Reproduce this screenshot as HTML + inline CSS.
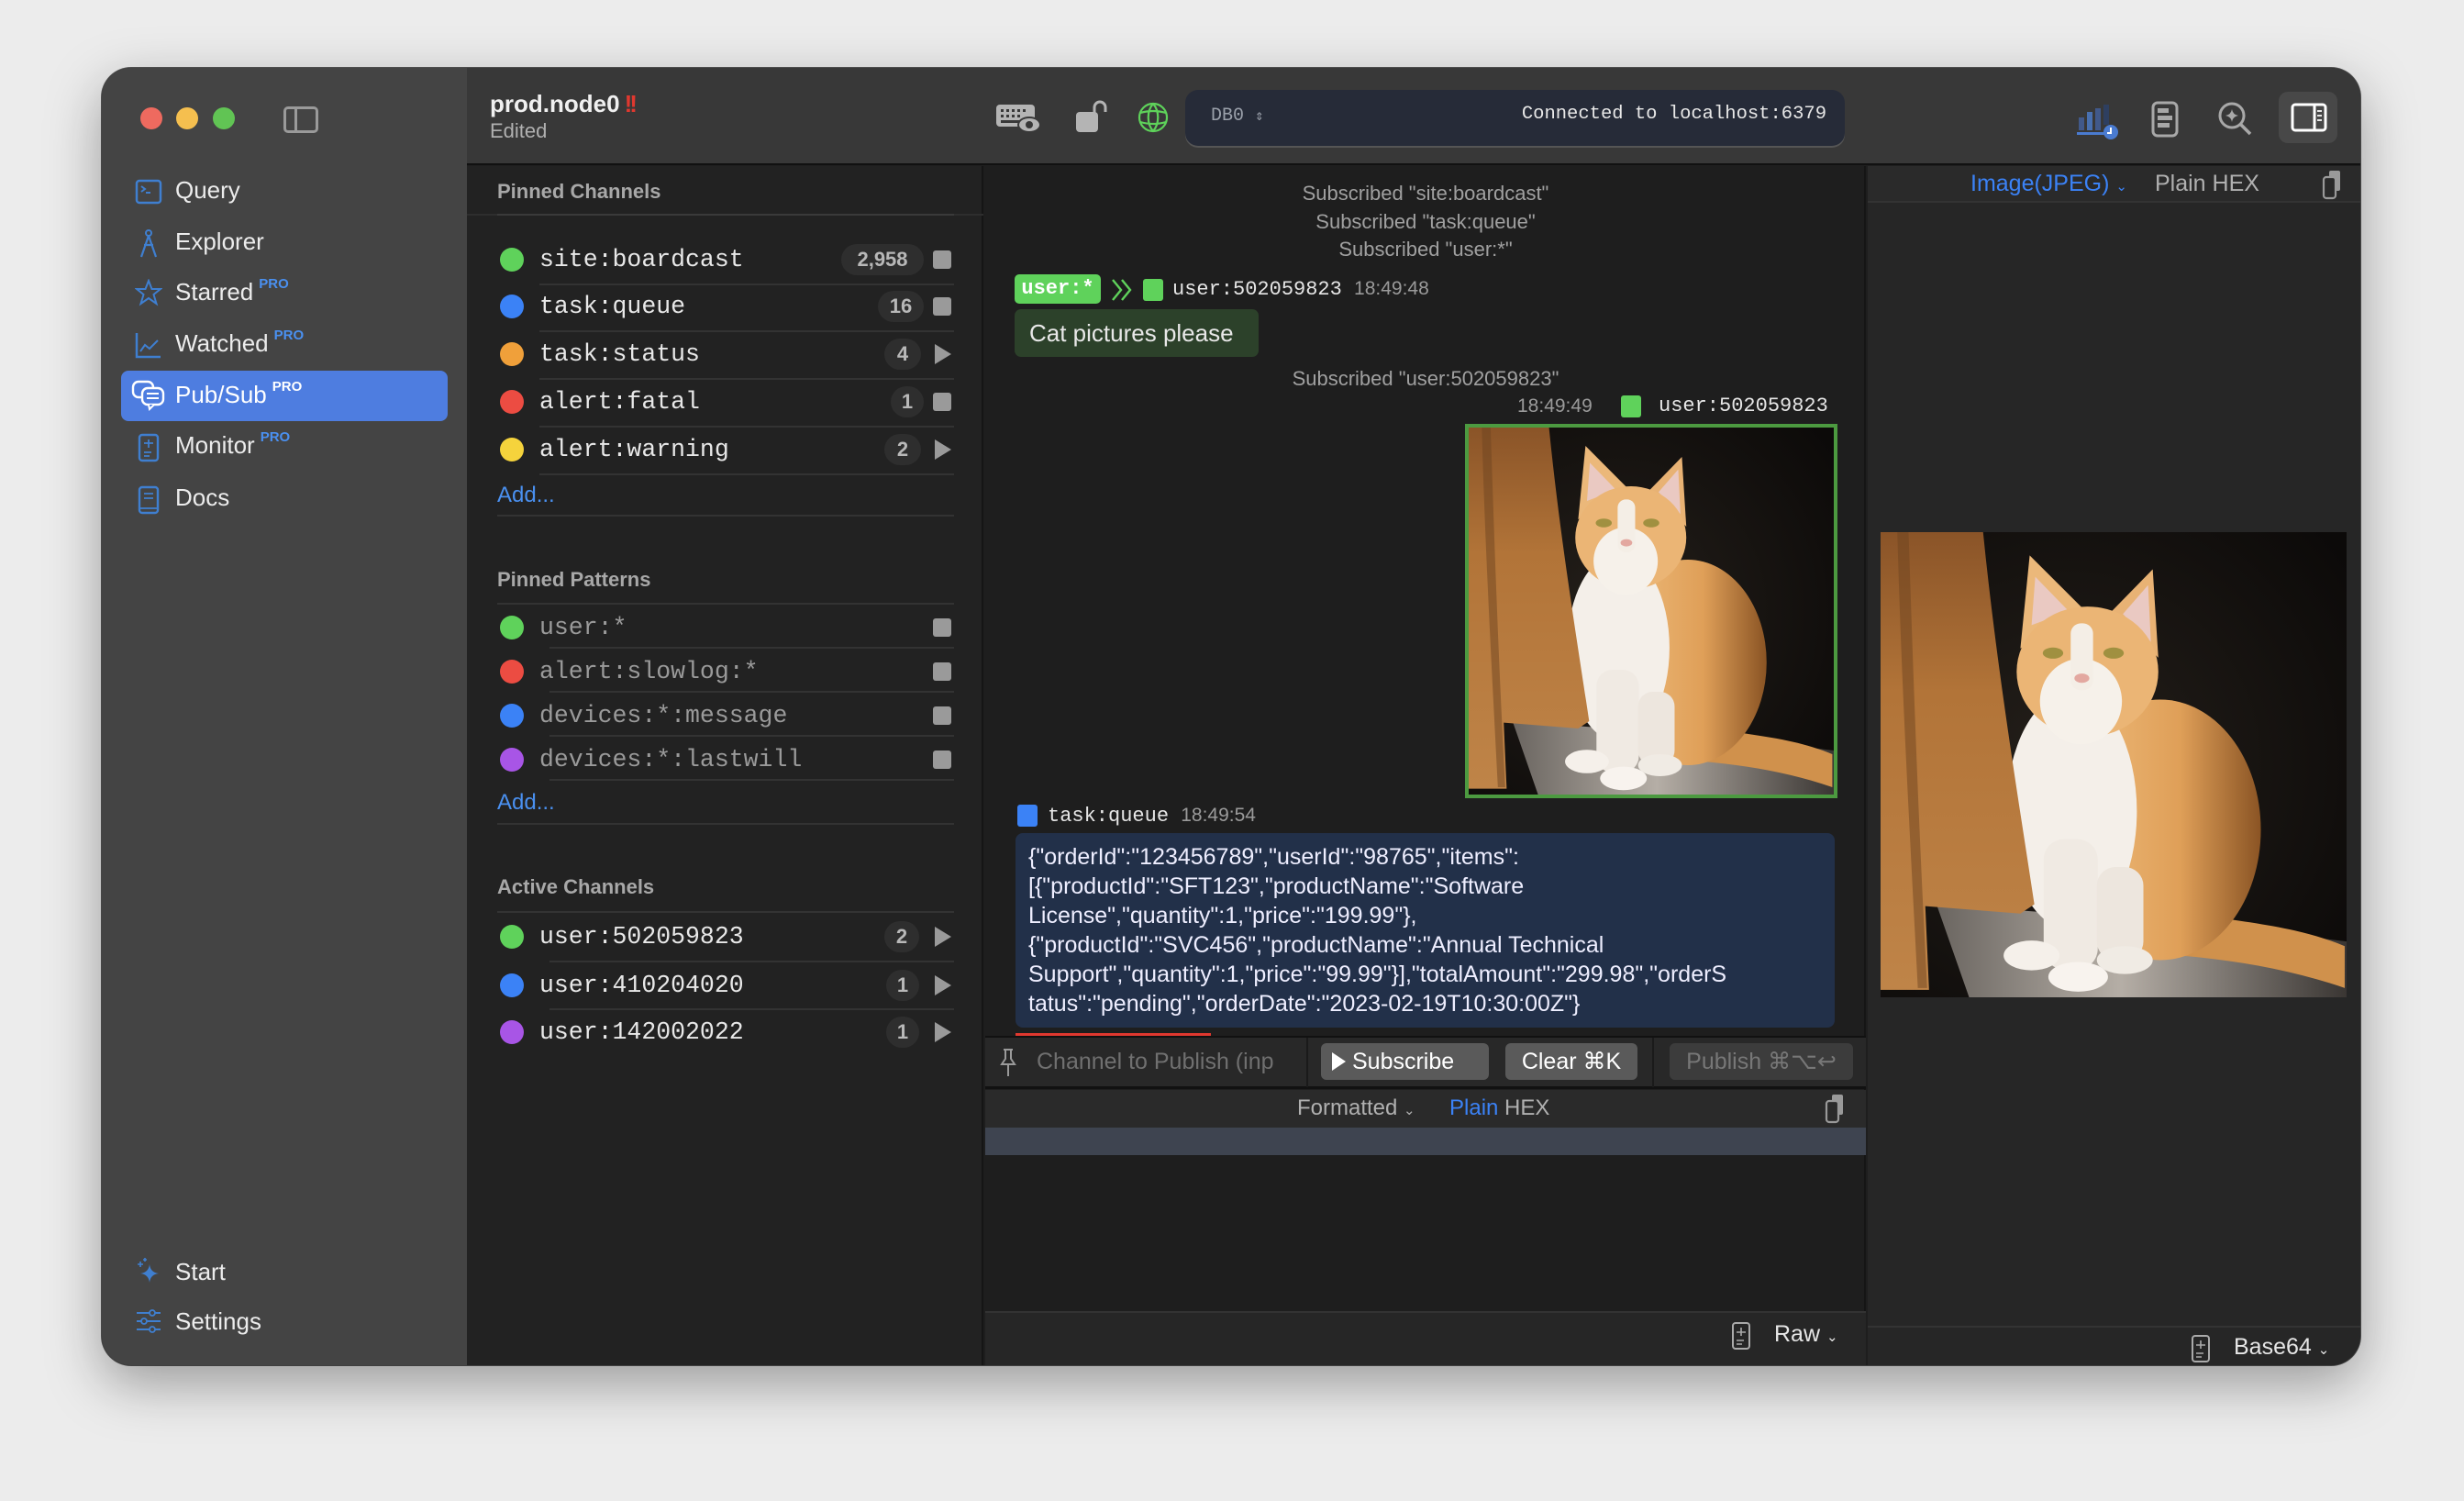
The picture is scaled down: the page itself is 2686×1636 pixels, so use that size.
<!DOCTYPE html>
<html><head><meta charset="utf-8">
<style>
*{margin:0;padding:0;box-sizing:border-box}
body{width:2686px;height:1636px;background:#ececec;position:relative;overflow:hidden;font-family:"Liberation Sans",sans-serif;color:#e6e6e6}
.a{position:absolute}
.win{position:absolute;left:111px;top:74px;width:2462px;height:1414px;border-radius:32px;overflow:hidden;background:#1e1e1e;box-shadow:0 20px 60px rgba(0,0,0,.35),0 0 0 1px #555}
.mono{font-family:"Liberation Mono","DejaVu Sans Mono",monospace}
.side{left:0;top:0;width:398px;height:1414px;background:#444}
.nav{position:absolute;left:80px;font-size:26px;color:#ececec}
.pro{font-size:15px;color:#4a90f0;vertical-align:top;position:relative;top:-2px;margin-left:6px;font-weight:bold}
.ico{position:absolute;left:36px}
.hdr{font-size:22px;font-weight:bold;color:#a8a8a8;position:absolute;left:431px}
.line{position:absolute;height:2px;background:#333}
.dot{position:absolute;left:434px;width:26px;height:26px;border-radius:50%}
.ch{position:absolute;left:477px;font-size:26.5px;color:#e8e8e8;line-height:30px}
.pat{color:#9a9a9a}
.badge{position:absolute;height:34px;border-radius:17px;background:#2e2e2e;color:#b8b8b8;font-size:22px;font-weight:bold;line-height:34px;text-align:center}
.stop{position:absolute;left:906px;width:20px;height:20px;background:#9a9a9a;border-radius:3px}
.play{position:absolute;left:908px;width:0;height:0;border-top:11px solid transparent;border-bottom:11px solid transparent;border-left:18px solid #9a9a9a}
.add{position:absolute;left:431px;font-size:24px;color:#4a90f0}
.sub{position:absolute;left:963px;width:960px;text-align:center;font-size:22px;color:#a0a0a0}
</style></head><body>
<svg width="0" height="0" style="position:absolute">
<defs>
<linearGradient id="cur" x1="0" y1="0" x2="0" y2="1"><stop offset="0" stop-color="#8a5428"/><stop offset=".35" stop-color="#b27438"/><stop offset="1" stop-color="#bf8448"/></linearGradient>
<linearGradient id="flo" x1="0" y1="0" x2="1" y2="0"><stop offset="0" stop-color="#6a6560"/><stop offset=".45" stop-color="#b5aea6"/><stop offset="1" stop-color="#3a3633"/></linearGradient>
<radialGradient id="bg" cx=".4" cy=".5" r=".75"><stop offset="0" stop-color="#241f1a"/><stop offset="1" stop-color="#0c0a09"/></radialGradient>
<linearGradient id="body" x1="0" y1="0" x2="1" y2="0"><stop offset="0" stop-color="#f0bf80"/><stop offset=".6" stop-color="#df9f58"/><stop offset="1" stop-color="#8a5424"/></linearGradient>
<g id="cat">
<rect width="500" height="500" fill="url(#bg)"/>
<polygon points="60,400 330,420 500,440 500,500 95,500" fill="url(#flo)"/>
<path d="M330,410 C400,420 450,425 498,445 L498,490 C440,470 380,460 320,455 Z" fill="#d0914c"/>
<ellipse cx="300" cy="320" rx="108" ry="140" fill="url(#body)"/>
<ellipse cx="205" cy="300" rx="70" ry="128" fill="#f4efe9"/>
<rect x="175" y="330" width="58" height="140" rx="22" fill="#f0eae3"/>
<rect x="232" y="360" width="50" height="100" rx="20" fill="#ede6de"/>
<ellipse cx="162" cy="455" rx="30" ry="16" fill="#f5f0ea"/>
<ellipse cx="212" cy="478" rx="32" ry="16" fill="#f8f3ee"/>
<ellipse cx="262" cy="460" rx="30" ry="15" fill="#f0ebe4"/>
<polygon points="150,125 160,25 220,85" fill="#ebb87a"/>
<polygon points="248,85 292,40 298,135" fill="#e8b274"/>
<polygon points="162,100 166,48 202,85" fill="#eac9c2"/>
<polygon points="260,88 287,57 290,118" fill="#eac9c2"/>
<ellipse cx="222" cy="150" rx="76" ry="70" fill="#ebb575"/>
<ellipse cx="215" cy="182" rx="44" ry="46" fill="#f6f1ea"/>
<rect x="204" y="98" width="24" height="72" rx="11" fill="#f4eee6"/>
<ellipse cx="185" cy="130" rx="11" ry="6" fill="#a09040"/>
<ellipse cx="250" cy="130" rx="11" ry="6" fill="#a09040"/>
<ellipse cx="216" cy="157" rx="8" ry="5" fill="#e3a8a0"/>
<path d="M0,0 L110,0 C125,150 150,300 165,400 L150,410 L48,402 L52,492 L0,492 Z" fill="url(#cur)"/>
<path d="M18,0 L30,0 C35,150 40,300 50,490 L40,490 C30,300 22,150 18,0Z" fill="#6e4420" opacity=".5"/>
</g>
</defs></svg>

<div class="win">
<div class="a side"></div>
<div class="a" style="left:42px;top:43px;width:24px;height:24px;border-radius:50%;background:#ee6a5f"></div>
<div class="a" style="left:81px;top:43px;width:24px;height:24px;border-radius:50%;background:#f5bf4f"></div>
<div class="a" style="left:121px;top:43px;width:24px;height:24px;border-radius:50%;background:#61c454"></div>
<div class="a" style="left:198px;top:42px;width:38px;height:29px;border:3px solid #9a9a9a;border-radius:5px"><div class="a" style="left:9px;top:0;width:3px;height:23px;background:#9a9a9a"></div></div>

<svg class="ico" style="top:120px" width="30" height="30" viewBox="0 0 30 30"><rect x="2" y="3" width="26" height="24" rx="3" fill="none" stroke="#3f7fd0" stroke-width="2.5"/><path d="M7 9 l4 3 -4 3 M12 16 h5" stroke="#3f7fd0" stroke-width="2" fill="none"/></svg>
<div class="nav" style="top:118px">Query</div>
<svg class="ico" style="top:175px" width="30" height="32" viewBox="0 0 30 32"><circle cx="15" cy="5" r="3" fill="none" stroke="#3f7fd0" stroke-width="2"/><path d="M15 8 L7 31 M15 8 L23 31 M10 18 h10" stroke="#3f7fd0" stroke-width="2.2" fill="none"/></svg>
<div class="nav" style="top:174px">Explorer</div>
<svg class="ico" style="top:230px" width="30" height="30" viewBox="0 0 30 30"><path d="M15 2 L18.5 11 L28 11 L20.5 17 L23.5 27 L15 21 L6.5 27 L9.5 17 L2 11 L11.5 11 Z" fill="none" stroke="#3f7fd0" stroke-width="2"/></svg>
<div class="nav" style="top:229px">Starred<span class="pro">PRO</span></div>
<svg class="ico" style="top:287px" width="30" height="30" viewBox="0 0 30 30"><path d="M2 2 V28 H28" stroke="#3f7fd0" stroke-width="2.5" fill="none"/><path d="M6 22 L11 15 L16 19 L25 10" stroke="#3f7fd0" stroke-width="2" fill="none"/></svg>
<div class="nav" style="top:285px">Watched<span class="pro">PRO</span></div>
<div class="a" style="left:21px;top:330px;width:356px;height:55px;border-radius:8px;background:#4e7de0"></div>
<svg class="ico" style="left:32px;top:340px" width="38" height="34" viewBox="0 0 38 34"><rect x="2" y="2" width="22" height="17" rx="6" fill="none" stroke="#fff" stroke-width="2.4"/><rect x="12" y="9" width="23" height="18" rx="6" fill="#4e7de0" stroke="#fff" stroke-width="2.4"/><path d="M17 15 h13 M17 20 h13" stroke="#fff" stroke-width="2"/><path d="M19 27 L20 32 L25 27" fill="#4e7de0" stroke="#fff" stroke-width="2"/></svg>
<div class="nav" style="top:341px;color:#fff">Pub/Sub<span class="pro" style="color:#fff">PRO</span></div>
<svg class="ico" style="top:398px" width="30" height="32" viewBox="0 0 30 32"><rect x="5" y="2" width="20" height="28" rx="3" fill="none" stroke="#3f7fd0" stroke-width="2.4"/><path d="M10 11 h10 M15 7 v9 M10 21 h8 M10 25 h6" stroke="#3f7fd0" stroke-width="1.8"/></svg>
<div class="nav" style="top:396px">Monitor<span class="pro">PRO</span></div>
<svg class="ico" style="top:455px" width="30" height="32" viewBox="0 0 30 32"><rect x="5" y="2" width="20" height="28" rx="3" fill="none" stroke="#3f7fd0" stroke-width="2.4"/><path d="M10 9 h10 M10 14 h10 M5 25 h20" stroke="#3f7fd0" stroke-width="1.8"/></svg>
<div class="nav" style="top:453px">Docs</div>
<svg class="ico" style="top:1296px" width="30" height="30" viewBox="0 0 30 30"><path d="M16 8 Q17 17 26 18 Q17 19 16 28 Q15 19 6 18 Q15 17 16 8Z" fill="#3f7fd0"/><path d="M6 5 v6 M3 8 h6 M11 1 v4 M9 3 h4" stroke="#3f7fd0" stroke-width="1.6"/></svg>
<div class="nav" style="top:1297px">Start</div>
<svg class="ico" style="top:1353px" width="30" height="26" viewBox="0 0 30 26"><path d="M2 4 h26 M2 13 h26 M2 22 h26" stroke="#3f7fd0" stroke-width="2"/><circle cx="19" cy="4" r="3" fill="#444" stroke="#3f7fd0" stroke-width="1.8"/><circle cx="10" cy="13" r="3" fill="#444" stroke="#3f7fd0" stroke-width="1.8"/><circle cx="19" cy="22" r="3" fill="#444" stroke="#3f7fd0" stroke-width="1.8"/></svg>
<div class="nav" style="top:1351px">Settings</div>

<div class="a" style="left:398px;top:0;width:2064px;height:106px;background:#383838;border-bottom:2px solid #111"></div>
<div class="a" style="left:423px;top:24px;font-size:26px;font-weight:bold;color:#f0f0f0">prod.node0<span style="color:#e0382f;letter-spacing:-3px;margin-left:5px">!!</span></div>
<div class="a" style="left:423px;top:56px;font-size:22px;color:#b0b0b0">Edited</div>
<svg class="a" style="left:975px;top:38px" width="50" height="34" viewBox="0 0 50 34"><rect x="0" y="2" width="42" height="24" rx="4" fill="#b4b4b4"/><g fill="#383838"><rect x="5" y="7" width="3" height="3"/><rect x="11" y="7" width="3" height="3"/><rect x="17" y="7" width="3" height="3"/><rect x="23" y="7" width="3" height="3"/><rect x="29" y="7" width="3" height="3"/><rect x="5" y="13" width="3" height="3"/><rect x="11" y="13" width="3" height="3"/><rect x="17" y="13" width="3" height="3"/><rect x="23" y="13" width="3" height="3"/><rect x="5" y="19" width="22" height="3"/></g><ellipse cx="36" cy="24" rx="13" ry="9" fill="#383838"/><ellipse cx="36" cy="24" rx="11" ry="7" fill="#b4b4b4"/><circle cx="36" cy="24" r="4" fill="#383838"/></svg>
<svg class="a" style="left:1060px;top:34px" width="40" height="40" viewBox="0 0 40 40"><rect x="2" y="14" width="24" height="22" rx="4" fill="#b4b4b4"/><path d="M22 15 V9 a6 6 0 0 1 12 0 V14" fill="none" stroke="#b4b4b4" stroke-width="3"/></svg>
<svg class="a" style="left:1129px;top:37px" width="34" height="34" viewBox="0 0 34 34"><g fill="none" stroke="#5ed25a" stroke-width="2.2"><circle cx="17" cy="17" r="15"/><path d="M17 2 C10 10 10 24 17 32 M17 2 C24 10 24 24 17 32 M3 12 Q17 8 31 12 M3 22 Q17 26 31 22"/></g></svg>
<div class="a" style="left:1181px;top:24px;width:719px;height:61px;border-radius:14px;background:#262b38;box-shadow:0 2px 0 #555"></div>
<div class="a mono" style="left:1209px;top:41px;font-size:20px;color:#9aa0aa">DB0 <span style="font-size:16px">⇕</span></div>
<div class="a mono" style="left:1520px;top:39px;width:360px;text-align:right;font-size:20.5px;color:#e8e8e8">Connected to localhost:6379</div>
<svg class="a" style="left:2153px;top:38px" width="46" height="40" viewBox="0 0 46 40"><rect x="2" y="16" width="6" height="14" fill="#41598a"/><rect x="11" y="10" width="6" height="20" fill="#4870b0"/><rect x="20" y="6" width="6" height="24" fill="#41598a"/><rect x="29" y="2" width="6" height="22" fill="#2e3f60"/><rect x="0" y="32" width="32" height="3" fill="#4a7bd0"/><circle cx="37" cy="32" r="8" fill="#4a7bd0"/><path d="M37 27 v6 h-4" stroke="#fff" stroke-width="2" fill="none"/></svg>
<svg class="a" style="left:2234px;top:36px" width="30" height="40" viewBox="0 0 30 40"><rect x="2" y="2" width="26" height="36" rx="5" fill="none" stroke="#a8a8a8" stroke-width="3"/><rect x="7" y="8" width="12" height="5" fill="#a8a8a8"/><rect x="7" y="16" width="16" height="5" fill="#a8a8a8"/><rect x="7" y="24" width="13" height="5" fill="#a8a8a8"/></svg>
<svg class="a" style="left:2306px;top:36px" width="40" height="40" viewBox="0 0 40 40"><circle cx="16" cy="16" r="13" fill="none" stroke="#a8a8a8" stroke-width="3"/><path d="M25 25 L36 36" stroke="#a8a8a8" stroke-width="3.5"/><path d="M16 9 Q17 15 23 16 Q17 17 16 23 Q15 17 9 16 Q15 15 16 9Z" fill="#a8a8a8"/></svg>
<div class="a" style="left:2373px;top:26px;width:64px;height:56px;border-radius:10px;background:#484848"></div>
<svg class="a" style="left:2386px;top:38px" width="40" height="32" viewBox="0 0 40 32"><rect x="2" y="2" width="36" height="28" rx="3" fill="none" stroke="#fff" stroke-width="3"/><path d="M26 2 V30" stroke="#fff" stroke-width="3"/><path d="M29 9 h5 M29 14 h5 M29 19 h5" stroke="#fff" stroke-width="1.8"/></svg>

<div class="a" style="left:398px;top:107px;width:563px;height:1307px;background:#222;border-right:2px solid #151515"></div>
<div class="hdr" style="top:122px">Pinned Channels</div>
<div class="line" style="left:398px;top:159px;width:563px;background:#2e2e2e"></div>
<div class="line" style="left:431px;top:159px;width:498px;background:#3a3a3a"></div>

<div class="dot" style="top:196px;background:#5fd25b"></div><div class="ch mono" style="top:194px">site:boardcast</div>
<div class="badge" style="left:806px;top:192px;width:90px">2,958</div><div class="stop" style="top:199px"></div>
<div class="line" style="left:477px;top:235px;width:452px"></div>
<div class="dot" style="top:247px;background:#3b82f6"></div><div class="ch mono" style="top:245px">task:queue</div>
<div class="badge" style="left:846px;top:243px;width:50px">16</div><div class="stop" style="top:250px"></div>
<div class="line" style="left:477px;top:286px;width:452px"></div>
<div class="dot" style="top:299px;background:#f0a03a"></div><div class="ch mono" style="top:297px">task:status</div>
<div class="badge" style="left:853px;top:295px;width:40px">4</div><div class="play" style="top:301px"></div>
<div class="line" style="left:477px;top:338px;width:452px"></div>
<div class="dot" style="top:351px;background:#ec4c42"></div><div class="ch mono" style="top:349px">alert:fatal</div>
<div class="badge" style="left:860px;top:347px;width:36px">1</div><div class="stop" style="top:354px"></div>
<div class="line" style="left:477px;top:390px;width:452px"></div>
<div class="dot" style="top:403px;background:#f5d33c"></div><div class="ch mono" style="top:401px">alert:warning</div>
<div class="badge" style="left:853px;top:399px;width:40px">2</div><div class="play" style="top:405px"></div>
<div class="line" style="left:477px;top:442px;width:452px"></div>
<div class="add" style="top:452px">Add...</div>
<div class="line" style="left:431px;top:487px;width:498px"></div>

<div class="hdr" style="top:545px">Pinned Patterns</div>
<div class="line" style="left:431px;top:583px;width:498px"></div>
<div class="dot" style="top:597px;background:#5fd25b"></div><div class="ch mono pat" style="top:595px">user:*</div><div class="stop" style="top:600px"></div>
<div class="line" style="left:488px;top:631px;width:441px"></div>
<div class="dot" style="top:645px;background:#ec4c42"></div><div class="ch mono pat" style="top:643px">alert:slowlog:*</div><div class="stop" style="top:648px"></div>
<div class="line" style="left:488px;top:679px;width:441px"></div>
<div class="dot" style="top:693px;background:#3b82f6"></div><div class="ch mono pat" style="top:691px">devices:*:message</div><div class="stop" style="top:696px"></div>
<div class="line" style="left:488px;top:727px;width:441px"></div>
<div class="dot" style="top:741px;background:#a855e6"></div><div class="ch mono pat" style="top:739px">devices:*:lastwill</div><div class="stop" style="top:744px"></div>
<div class="line" style="left:488px;top:775px;width:441px"></div>
<div class="add" style="top:787px">Add...</div>
<div class="line" style="left:431px;top:823px;width:498px"></div>

<div class="hdr" style="top:880px">Active Channels</div>
<div class="line" style="left:431px;top:919px;width:498px"></div>
<div class="dot" style="top:934px;background:#5fd25b"></div><div class="ch mono" style="top:932px">user:502059823</div>
<div class="badge" style="left:853px;top:930px;width:38px">2</div><div class="play" style="top:936px"></div>
<div class="line" style="left:488px;top:973px;width:441px"></div>
<div class="dot" style="top:987px;background:#3b82f6"></div><div class="ch mono" style="top:985px">user:410204020</div>
<div class="badge" style="left:855px;top:983px;width:36px">1</div><div class="play" style="top:989px"></div>
<div class="line" style="left:488px;top:1025px;width:441px"></div>
<div class="dot" style="top:1038px;background:#a855e6"></div><div class="ch mono" style="top:1036px">user:142002022</div>
<div class="badge" style="left:855px;top:1034px;width:36px">1</div><div class="play" style="top:1040px"></div>

<div class="a" style="left:963px;top:107px;width:960px;height:1307px;background:#1e1e1e;border-right:2px solid #151515"></div>
<div class="sub" style="top:124px">Subscribed "site:boardcast"</div>
<div class="sub" style="top:155px">Subscribed "task:queue"</div>
<div class="sub" style="top:185px">Subscribed "user:*"</div>
<div class="a mono" style="left:995px;top:225px;width:94px;height:32px;border-radius:5px;background:#5fd25b;color:#fff;font-weight:bold;font-size:22px;line-height:32px;text-align:center">user:*</div>
<svg class="a" style="left:1099px;top:229px" width="28" height="26" viewBox="0 0 28 26"><path d="M3 2 L12 13 L3 24 M13 2 L22 13 L13 24" stroke="#5fd25b" stroke-width="2.4" fill="none"/></svg>
<div class="a" style="left:1135px;top:230px;width:22px;height:24px;border-radius:3px;background:#5fd25b"></div>
<div class="a mono" style="left:1167px;top:229px;font-size:22px;color:#e6e6e6">user:502059823 <span style="font-family:'Liberation Sans',sans-serif;color:#9a9a9a;font-size:21px">18:49:48</span></div>
<div class="a" style="left:995px;top:263px;width:266px;height:52px;border-radius:7px;background:#2c412a;font-size:26px;line-height:52px;padding-left:16px;color:#e8e8e8">Cat pictures please</div>
<div class="sub" style="top:326px">Subscribed "user:502059823"</div>
<div class="a" style="left:1543px;top:357px;font-size:21px;color:#9a9a9a">18:49:49</div>
<div class="a" style="left:1656px;top:357px;width:22px;height:24px;border-radius:3px;background:#5fd25b"></div>
<div class="a mono" style="left:1697px;top:356px;font-size:22px;color:#e6e6e6">user:502059823</div>
<div class="a" style="left:1486px;top:388px;width:406px;height:408px;border:4px solid #4c9a40;background:#111;overflow:hidden"><svg width="398" height="400" viewBox="0 0 500 500" preserveAspectRatio="none"><use href="#cat"/></svg></div>
<div class="a" style="left:998px;top:803px;width:22px;height:24px;border-radius:3px;background:#3b82f6"></div>
<div class="a mono" style="left:1031px;top:803px;font-size:22px;color:#e6e6e6">task:queue <span style="font-family:'Liberation Sans',sans-serif;color:#9a9a9a;font-size:21px">18:49:54</span></div>
<div class="a" style="left:996px;top:834px;width:893px;height:212px;border-radius:8px;background:#223049;padding:10px 14px;font-size:25px;line-height:32px;color:#eef;word-break:break-all">{"orderId":"123456789","userId":"98765","items":<br>[{"productId":"SFT123","productName":"Software<br>License","quantity":1,"price":"199.99"},<br>{"productId":"SVC456","productName":"Annual Technical<br>Support","quantity":1,"price":"99.99"}],"totalAmount":"299.98","orderS<br>tatus":"pending","orderDate":"2023-02-19T10:30:00Z"}</div>
<div class="a" style="left:996px;top:1052px;width:213px;height:3px;background:#e0382f"></div>

<div class="a" style="left:963px;top:1055px;width:960px;height:58px;background:#282828;border-top:2px solid #111;border-bottom:3px solid #111"></div>
<svg class="a" style="left:978px;top:1068px" width="20" height="32" viewBox="0 0 20 32"><path d="M5 2 h10 M7 2 v10 l-4 6 h14 l-4 -6 v-10 M10 18 v13" stroke="#9a9a9a" stroke-width="2" fill="none"/></svg>
<div class="a" style="left:1019px;top:1069px;font-size:25px;color:#707070">Channel to Publish (inp</div>
<div class="a" style="left:1313px;top:1057px;width:2px;height:54px;background:#1a1a1a"></div>
<div class="a" style="left:1329px;top:1063px;width:183px;height:40px;border-radius:6px;background:#5a5a5a;font-size:25px;line-height:40px;color:#fff;padding-left:34px">Subscribe</div>
<div class="a" style="left:1341px;top:1073px;width:0;height:0;border-top:10px solid transparent;border-bottom:10px solid transparent;border-left:15px solid #fff"></div>
<div class="a" style="left:1530px;top:1063px;width:144px;height:40px;border-radius:6px;background:#5a5a5a;font-size:25px;line-height:40px;color:#fff;text-align:center">Clear ⌘K</div>
<div class="a" style="left:1690px;top:1057px;width:2px;height:54px;background:#1a1a1a"></div>
<div class="a" style="left:1709px;top:1063px;width:200px;height:40px;border-radius:6px;background:#3c3c3c;font-size:25px;line-height:40px;color:#777;text-align:center">Publish ⌘⌥↩</div>

<div class="a" style="left:963px;top:1114px;width:960px;height:41px;background:#2a2a2a"></div>
<div class="a" style="left:1303px;top:1120px;font-size:24px;color:#b0b0b0">Formatted <span style="font-size:15px">⌄</span></div>
<div class="a" style="left:1469px;top:1120px;font-size:24px;color:#3b82f6">Plain <span style="color:#b0b0b0">HEX</span></div>
<svg class="a" style="left:1878px;top:1117px" width="24" height="34" viewBox="0 0 24 34"><rect x="8" y="2" width="12" height="22" rx="2" fill="#999"/><rect x="2" y="9" width="13" height="23" rx="3" fill="#2a2a2a" stroke="#999" stroke-width="2.2"/></svg>
<div class="a" style="left:963px;top:1155px;width:960px;height:30px;background:#3e4450"></div>
<div class="a" style="left:963px;top:1355px;width:960px;height:59px;background:#262626;border-top:2px solid #333"></div>
<svg class="a" style="left:1776px;top:1366px" width="22" height="32" viewBox="0 0 22 32"><rect x="2" y="2" width="18" height="28" rx="3" fill="none" stroke="#aaa" stroke-width="2"/><path d="M6 12 h10 M11 7 v9 M6 21 h8 M6 25 h6" stroke="#aaa" stroke-width="1.6"/></svg>
<div class="a" style="left:1823px;top:1366px;font-size:25px;color:#e6e6e6">Raw <span style="font-size:15px">⌄</span></div>

<div class="a" style="left:1925px;top:107px;width:537px;height:1307px;background:#262626"></div>
<div class="a" style="left:1925px;top:107px;width:537px;height:40px;background:#2a2a2a;border-bottom:2px solid #333"></div>
<div class="a" style="left:2037px;top:112px;font-size:25px;color:#3b82f6">Image(JPEG) <span style="font-size:15px">⌄</span></div>
<div class="a" style="left:2238px;top:112px;font-size:25px;color:#b0b0b0">Plain HEX</div>
<svg class="a" style="left:2420px;top:110px" width="24" height="34" viewBox="0 0 24 34"><rect x="8" y="2" width="12" height="22" rx="2" fill="#999"/><rect x="2" y="9" width="13" height="23" rx="3" fill="#2a2a2a" stroke="#999" stroke-width="2.2"/></svg>
<div class="a" style="left:1939px;top:506px;width:508px;height:507px;overflow:hidden"><svg width="508" height="507" viewBox="0 0 500 500" preserveAspectRatio="none"><use href="#cat"/></svg></div>
<div class="a" style="left:1925px;top:1371px;width:537px;height:43px;border-top:2px solid #333"></div>
<svg class="a" style="left:2277px;top:1380px" width="22" height="32" viewBox="0 0 22 32"><rect x="2" y="2" width="18" height="28" rx="3" fill="none" stroke="#aaa" stroke-width="2"/><path d="M6 12 h10 M11 7 v9 M6 21 h8 M6 25 h6" stroke="#aaa" stroke-width="1.6"/></svg>
<div class="a" style="left:2324px;top:1380px;font-size:25px;color:#e6e6e6">Base64 <span style="font-size:15px">⌄</span></div>
</div>
</body></html>
